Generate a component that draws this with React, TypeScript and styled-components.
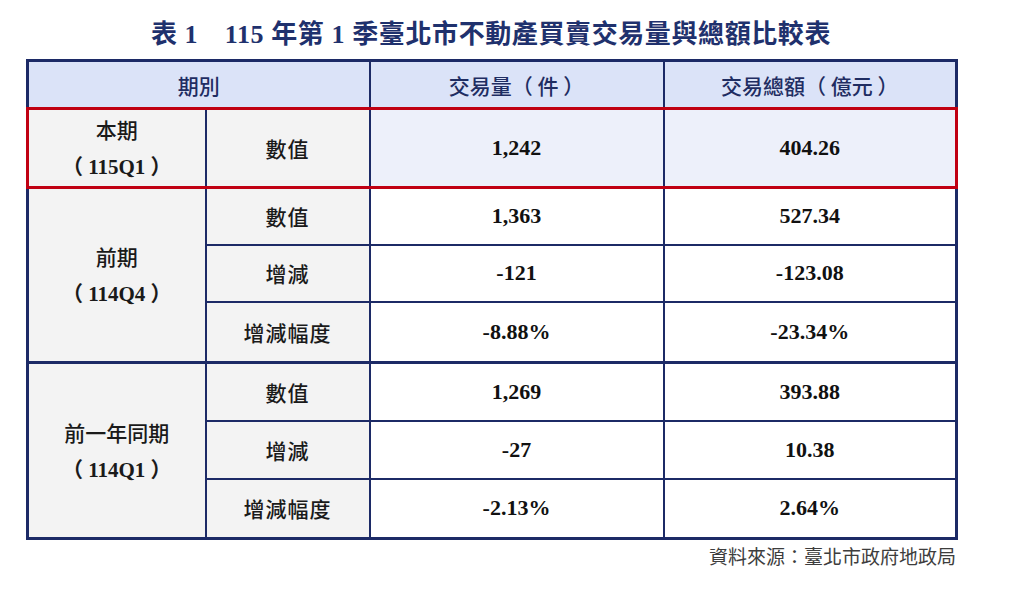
import styled, { createGlobalStyle } from 'styled-components';

const GlobalStyle = createGlobalStyle`
  html, body {
    margin: 0;
    padding: 0;
    background: #fff;
  }
  body {
    font-family: "Liberation Serif", "Noto Sans CJK TC", serif;
  }
`;

type Row = {
  label: string;
  volume: string;
  amount: string;
  height: number;
};

type Group = {
  name: string;
  code: string;
  current?: boolean;
  rows: Row[];
};

const groups: Group[] = [
  {
    name: '本期',
    code: '115Q1',
    current: true,
    rows: [{ label: '數值', volume: '1,242', amount: '404.26', height: 77 }],
  },
  {
    name: '前期',
    code: '114Q4',
    rows: [
      { label: '數值', volume: '1,363', amount: '527.34', height: 57 },
      { label: '增減', volume: '-121', amount: '-123.08', height: 57 },
      { label: '增減幅度', volume: '-8.88%', amount: '-23.34%', height: 61 },
    ],
  },
  {
    name: '前一年同期',
    code: '114Q1',
    rows: [
      { label: '數值', volume: '1,269', amount: '393.88', height: 58 },
      { label: '增減', volume: '-27', amount: '10.38', height: 58 },
      { label: '增減幅度', volume: '-2.13%', amount: '2.64%', height: 60 },
    ],
  },
];

function App() {
  return (
    <>
      <GlobalStyle />
      <Page>
        <Title>表 1　115 年第 1 季臺北市不動產買賣交易量與總額比較表</Title>
        <Table>
          <colgroup>
            <col style={{ width: 178 }} />
            <col style={{ width: 164 }} />
            <col style={{ width: 294 }} />
            <col style={{ width: 293 }} />
          </colgroup>
          <thead>
            <tr>
              <HeadCell colSpan={2}>期別</HeadCell>
              <HeadCell>交易量（ 件 ）</HeadCell>
              <HeadCell>交易總額（ 億元 ）</HeadCell>
            </tr>
          </thead>
          {groups.map((group) => (
            <GroupBody key={group.code} $current={group.current}>
              {group.rows.map((row, i) => (
                <BodyRow key={row.label} $height={row.height}>
                  {i === 0 && (
                    <PeriodCell rowSpan={group.rows.length}>
                      <PeriodName>{group.name}</PeriodName>
                      <PeriodCode>（ {group.code} ）</PeriodCode>
                    </PeriodCell>
                  )}
                  <LabelCell>{row.label}</LabelCell>
                  <ValueCell $current={group.current}>{row.volume}</ValueCell>
                  <ValueCell $current={group.current}>{row.amount}</ValueCell>
                </BodyRow>
              ))}
            </GroupBody>
          ))}
        </Table>
        <Source>資料來源：臺北市政府地政局</Source>
      </Page>
    </>
  );
}

const Page = styled.div`
  width: 930px;
  margin-left: 26px;
  padding-top: 17px;
  display: flex;
  flex-direction: column;
`;

const Title = styled.h1`
  margin: 0 0 7px;
  text-align: center;
  color: #1f316d;
  font-family: "Liberation Serif", "Noto Sans CJK TC", serif;
  font-size: 26px;
  font-weight: 700;
  line-height: 35px;
  letter-spacing: 0.6px;
`;

const Table = styled.table`
  width: 930px;
  table-layout: fixed;
  border-collapse: collapse;
  border: 3px solid #1c2a66;
`;

const HeadCell = styled.th`
  height: 45px;
  padding: 0;
  background: #dbe3f8;
  border: 2px solid #1c2a66;
  color: #1f2d62;
  font-family: "Noto Sans CJK TC", sans-serif;
  font-size: 21px;
  font-weight: 500;
  text-align: center;
  vertical-align: middle;
`;

const GroupBody = styled.tbody<{ $current?: boolean }>`
  border: 3px solid ${(p) => (p.$current ? '#c00012' : '#1c2a66')};
`;

const BodyRow = styled.tr<{ $height: number }>`
  height: ${(p) => p.$height}px;
`;

const Cell = styled.td`
  padding: 0;
  border: 2px solid #1c2a66;
  text-align: center;
  vertical-align: middle;
`;

const PeriodCell = styled(Cell)`
  background: #f3f3f3;
  color: #1a1a1a;
  font-size: 21px;
  line-height: 38px;
`;

const PeriodName = styled.div`
  font-family: "Noto Sans CJK TC", sans-serif;
  font-weight: 500;
`;

const PeriodCode = styled.div`
  font-family: "Liberation Serif", "Noto Sans CJK TC", serif;
  font-weight: 700;
`;

const LabelCell = styled(Cell)`
  background: #f3f3f3;
  color: #1a1a1a;
  font-family: "Noto Sans CJK TC", sans-serif;
  font-size: 21px;
  font-weight: 500;
  letter-spacing: 1px;
`;

const ValueCell = styled(Cell)<{ $current?: boolean }>`
  background: ${(p) => (p.$current ? '#edf0fa' : '#fff')};
  color: #111;
  font-family: "Liberation Serif", serif;
  font-size: 22px;
  font-weight: 700;
`;

const Source = styled.div`
  margin-top: 3px;
  text-align: right;
  color: #3d3d3d;
  font-family: "Noto Sans CJK TC", sans-serif;
  font-size: 19px;
  line-height: 26px;
`;

export default App;
